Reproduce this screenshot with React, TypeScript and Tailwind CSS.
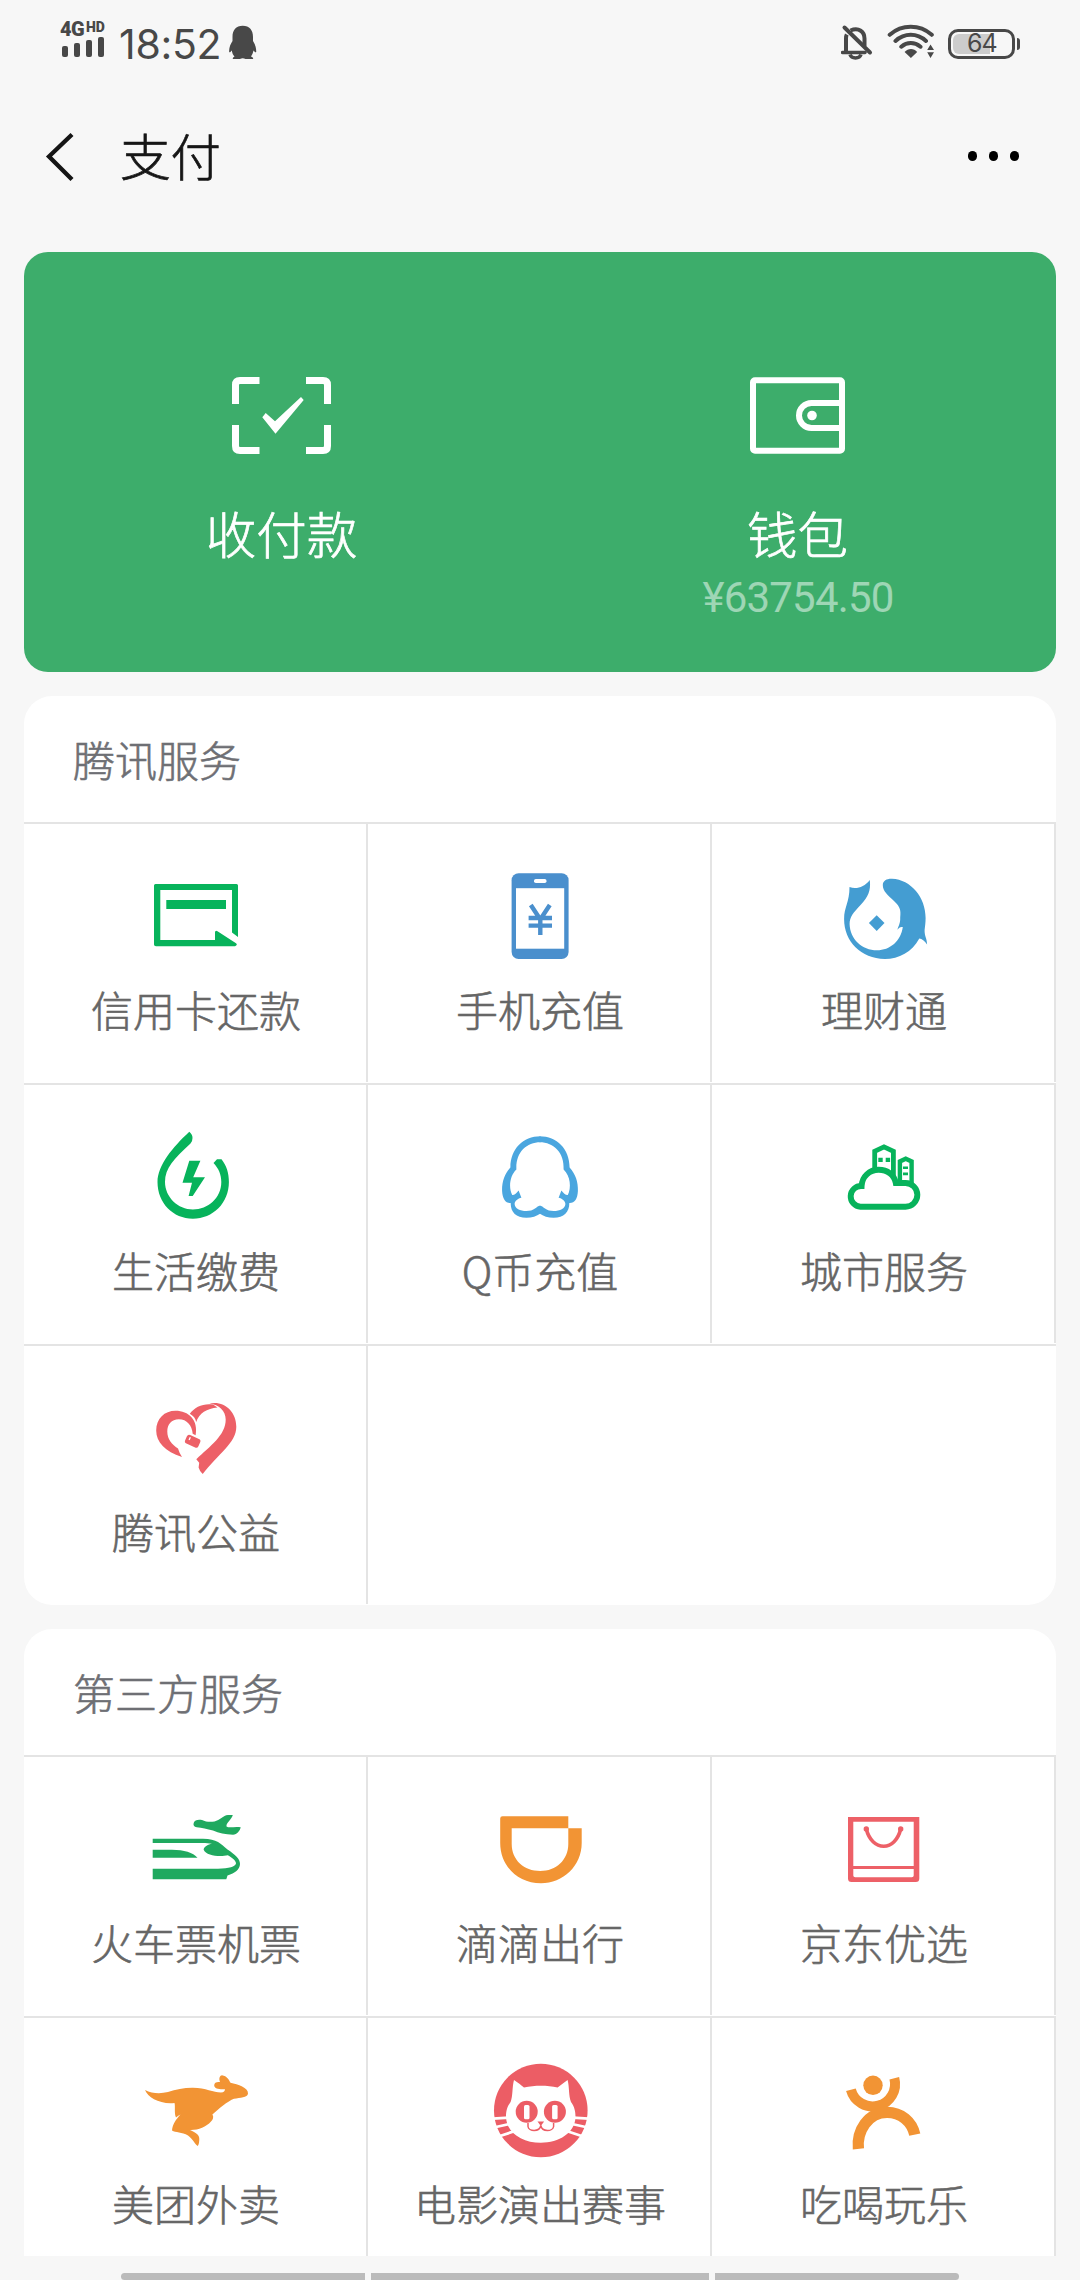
import type { ReactNode } from "react";

const GREEN = "#07b35b";
const RED = "#ed6067";
const ORANGE = "#f29434";

/** 100px square icon; x and y give the origin of its drawing space. */
function Icon({ x, y, children }: { x: number; y: number; children: ReactNode }) {
  return (
    <svg className="block size-[100px] shrink-0 overflow-visible" viewBox={`${x} ${y} 100 100`} fill="none">
      {children}
    </svg>
  );
}

const CardIcon = (
  <Icon x={145} y={867}>
    <path
      fill={GREEN}
      d="M155.5 884H236.5Q238 884 238 885.5V937L232 932.5V890H160.3V940H215V932.5Q215 930 217.5 931.3L236 943.3Q238 945 235 946.3H156Q154 946.3 154 944.5V885.5Q154 884 155.5 884Z"
    />
    <path fill={GREEN} d="M166.3 900H226V909H166.3Z" />
  </Icon>
);

const PhoneIcon = (
  <Icon x={489} y={867}>
    <rect x="511.6" y="873.3" width="57" height="85.7" rx="7" fill="#4a8fcd" />
    <rect x="516" y="888.2" width="48.2" height="60.5" fill="#fff" />
    <rect x="534" y="879" width="12.5" height="4" rx="1.8" fill="#fff" />
    <path d="M530.8 905L540.3 919.5L549.8 905M540.3 918V935M528.6 918H552M528.6 925.6H552" stroke="#4a8fcd" strokeWidth="4.4" />
  </Icon>
);

const FishIcon = (
  <Icon x={833} y={867}>
    <path
      fill="#449dd2"
      d="M849.5 887C856 889.5 864 887.5 869.8 880C871 891 868 897 861 904.5C853 913 849.6 917 849.6 924C850 939 862 950.3 877 950.3C890 950.3 901 941 902.8 927C900 926.500 899 928 897.300 929.800C898.500 926 900.500 923 900.200 917.500C901 910.500 900.300 907 894.500 901.500C887.500 894.500 882.800 891.500 882.800 885C882.800 880.500 887 878.500 892 878.700C911 879.500 925.800 897.500 925.600 918C925.600 923 925 926 924.600 930C924.400 936 927 938.500 927.100 944.500C924.500 941 922 938.700 919.300 938.500C912 952 899 959 884.800 959C861 958.500 844.100 941.500 844.100 919C844.100 907 849.500 902.500 849.500 887Z"
    />
    <path fill="#449dd2" d="M876.700 915.200L884.500 923L876.700 931L868.900 923Z" />
  </Icon>
);

const DropIcon = (
  <Icon x={145} y={1128}>
    <path
      fill={GREEN}
      d="M189.3 1131.7C191.5 1134 192.6 1135.5 192.5 1138Q192.5 1141.5 190.5 1143.5C174 1159 165 1168 165 1182C165 1197 178 1209.5 192.9 1209.5C208 1209.5 221.3 1198 221.3 1182C221.3 1174 218.5 1168.5 213.5 1163L217 1159.3H221.5C226.5 1165.5 228.9 1173 228.9 1182C228.9 1203 213 1218.7 192.9 1218.7C173 1218.7 157.5 1203 157.5 1182C157.5 1165 173 1147 189.3 1131.7Z"
    />
    <path fill={GREEN} d="M189.3 1160.7H200.4L193.2 1177.3H205L192.7 1196H188.6L192 1182.7H182.5Z" />
  </Icon>
);

const PENGUIN_HALF =
  "M539.5 1136.300C557 1136.300 569.500 1149 569.600 1167.500C575.500 1174 578.200 1182 577.900 1191C577.500 1199 574.500 1203.300 569.300 1203C569.500 1212 564 1217.700 553.600 1217.700C548 1217.700 543.500 1216.300 539.500 1213.500V1205.700C541.500 1205.500 543 1207 544.600 1208.300C547.500 1210.500 550 1211 553.600 1211C560 1211 565.200 1208.500 565.400 1204C565.200 1200.500 562 1198.500 558.600 1197.700L561.400 1190.500C563.500 1193 565.500 1195.200 567.800 1195C571.500 1188 570.500 1176 563.600 1169.500C564.500 1153 554 1142.300 539.500 1142.300Z";

const PenguinIcon = (
  <Icon x={489} y={1128}>
    <path fill="#4aa6df" d={PENGUIN_HALF} />
    <path fill="#4aa6df" d={PENGUIN_HALF} transform="matrix(-1 0 0 1 1080 0)" />
  </Icon>
);

const CityIcon = (
  <Icon x={833} y={1128}>
    <path stroke={GREEN} strokeWidth="4.800" d="M874.700 1169V1151.300L884 1146.800L893.400 1151.300V1184" />
    <path stroke={GREEN} strokeWidth="4.400" d="M899.900 1183V1161.500L905.700 1158.700L911.600 1161.500V1184" />
    <path fill={GREEN} d="M878.300 1157.700h4.400v4.400h-4.400zM885.700 1157.700h4.400v4.400h-4.400zM903 1166.500h5v2.600h-5zM903 1172.500h5v2.800h-5z" />
    <path
      fill="#fff"
      stroke={GREEN}
      strokeWidth="5.900"
      d="M861.600 1186C862 1176.500 869.500 1169.800 878.700 1169.800C887.500 1169.800 894.300 1175 895.800 1183H905.500A11.800 11.800 0 0 1 905.500 1206.700H860.500A10.300 10.300 0 0 1 861.600 1186Z"
    />
  </Icon>
);

const HeartIcon = (
  <Icon x={145} y={1389}>
    <path
      fill={RED}
      d="M182 1457C165 1451.500 156.200 1442 156.200 1430.500C156.200 1418.500 164.500 1410.700 175.500 1410.700C188.500 1410.700 198.500 1420 195.600 1435.300L192.700 1433.800C192 1425.500 187 1419.300 178.800 1419.300C171.500 1419.300 167.300 1424.500 167.300 1431.500C167.300 1439.500 172 1444.500 178 1448.500Q179.500 1453.500 182 1457Z"
    />
    <path fill={RED} d="M196.200 1422C195.500 1418.500 193.500 1416 189.800 1413.800C194.500 1407 203.500 1403 213 1404.500L217.500 1407.600C207 1408.500 199 1413.500 196.200 1422Z" />
    <path
      fill={RED}
      d="M209.500 1403.500C224 1400.300 236.300 1411.500 236.300 1426.700C236.300 1443 218 1454 202.700 1474Q199.500 1471 198.600 1467.500L199.200 1462.700L196.300 1459.300C210 1446 225.700 1435.500 225.700 1419.500C225.700 1411 219 1404.500 209.500 1403.500Z"
    />
    <g transform="rotate(24 192.500 1441)">
      <rect x="185.500" y="1436.500" width="14.500" height="9.300" rx="2.500" fill={RED} />
      <path d="M189 1438.500V1441.500" stroke="#fff" strokeWidth="1.300" />
    </g>
  </Icon>
);

const TrainIcon = (
  <Icon x={145} y={1800}>
    <path
      fill="#1fa95f"
      d="M152.700 1838.700H203C217 1838.700 221 1844 227.500 1849.500C235 1854.500 240.200 1859 240 1864C239.800 1869.500 235 1873 227.500 1875.500L226.300 1879.300H152.700V1868.700H218C229 1868.700 235.500 1866.500 236 1863.500C236 1860.500 231.500 1857.500 227.800 1855.300C220 1857 206 1856 203.600 1849.500C204.500 1846 208 1844.500 212 1843.700C209 1843.200 206 1843 202.500 1843H152.700Z"
    />
    <path fill="#1fa95f" d="M152.700 1849.700H172C184 1849.700 193 1852.500 197.500 1857.800H152.700Z" />
    <path
      fill="#1fa95f"
      d="M193.700 1823C194.500 1819.800 198 1819.500 202 1820C206 1822 210 1822 214.500 1821.500C220 1820 223 1815.500 228 1815H232.800C231.500 1820 226 1822.500 226.500 1826.500C229.500 1828.500 235 1826 240.700 1827.300C240 1831 237 1834.300 233 1834.800C225 1834.500 219 1833 213 1830.500C207 1829 202 1827.800 196.700 1827.300C194 1826.800 193 1825 193.700 1823Z"
    />
  </Icon>
);

const DidiIcon = (
  <Icon x={489} y={1800}>
    <path
      fill={ORANGE}
      fillRule="evenodd"
      d="M502.500 1816.300H568.300V1828.300H581.700V1843C581.700 1866 563 1883.300 541 1883.300C518 1883.300 500.200 1866 500.200 1843V1818.500Q500.200 1816.300 502.500 1816.300ZM511.700 1828.300V1844C511.700 1860 524 1871 540.300 1871C556 1871 568.300 1860 568.300 1844V1828.300Z"
    />
  </Icon>
);

const BagIcon = (
  <Icon x={833} y={1800}>
    <path
      fill={RED}
      fillRule="evenodd"
      d="M848 1817H919.300V1878.500Q919.300 1882 915.800 1882H851.500Q848 1882 848 1878.500ZM853.300 1821.700V1866H913.700V1821.700ZM853.300 1869V1875.500Q853.300 1877.300 855.200 1877.300H911.800Q913.700 1877.300 913.700 1875.500V1869Z"
    />
    <path d="M866.300 1829C869 1840 876 1846.200 883.700 1846.200S898 1840 900.700 1829" stroke={RED} strokeWidth="3.600" strokeLinecap="round" />
    <circle cx="866.300" cy="1829" r="2.700" fill={RED} />
    <circle cx="900.700" cy="1829" r="2.700" fill={RED} />
  </Icon>
);

const KangarooIcon = (
  <Icon x={145} y={2061}>
    <path
      fill={ORANGE}
      d="M145 2090C152 2093.500 160 2094 168 2092C176 2089.500 184 2087.700 193 2087.800C206 2088 213 2092.500 221 2092.500C224 2092.500 224.800 2091 225 2089.200C219.500 2089.500 214.500 2089 214.200 2085.500C214 2082.500 217 2081.500 220 2082C218.500 2078 220 2075.500 222 2075.300C227 2076 229 2080 230.500 2082.800C238 2084.500 248.300 2087.500 248 2093.500C247.500 2098 240 2097.500 234 2098.800C228 2101 218 2109.500 212.400 2114.500C214 2117 213 2119.500 211 2121.500C206 2127 198 2130.300 190 2130C196 2132.500 199.500 2135 199.300 2139C199.200 2142 199 2144 197.800 2146C195 2144.500 193 2139 188 2135.500C182 2132 175.500 2132.500 172 2130.500C172.500 2124 176 2119.500 180.500 2114.500C179 2115 177.500 2116 176 2117.500C174 2113 175.500 2107 174.500 2103C160 2104.500 148 2097.500 145 2090Z"
    />
  </Icon>
);

const CatIcon = (
  <Icon x={489} y={2061}>
    <circle cx="540.800" cy="2110.500" r="46.800" fill="#ec5d65" />
    <path
      fill="#fff"
      d="M514 2080C518 2082.500 521 2085 524 2087.500C535 2085 547 2085 557.600 2087.500C561 2085 564 2082.500 567.600 2080C569.500 2087 568.500 2096 571 2102C574.500 2107 575.500 2111 575.500 2117C575 2133 559 2142.700 540.800 2142.700S506.500 2133 506 2117C506 2111 507 2107 510.600 2102C513 2096 512 2087 514 2080Z"
    />
    <path stroke="#fff" strokeWidth="2.800" d="M493 2118.600L509 2117.600M496 2127L512 2123.500M500 2136L515 2131M588.600 2118.600L572.600 2117.600M585.600 2127L569.600 2123.500M581.600 2136L566.600 2131" />
    <circle cx="526.700" cy="2111.800" r="11" fill="#ec5d65" />
    <circle cx="554.900" cy="2111.800" r="11" fill="#ec5d65" />
    <rect x="524" y="2105" width="5.500" height="14.300" rx="1.500" fill="#fff" />
    <rect x="552.100" y="2105" width="5.500" height="14.300" rx="1.500" fill="#fff" />
    <path fill="#ec5d65" d="M537.500 2121.500H544.100L540.800 2126Z" />
    <path stroke="#ec5d65" strokeWidth="1.500" d="M528 2123V2126.500C528.500 2131.500 539.500 2132.500 540.800 2125.500C542.100 2132.500 553 2131.500 553.600 2126.500V2123" />
  </Icon>
);

const PersonIcon = (
  <Icon x={833} y={2061}>
    <circle cx="873" cy="2085.300" r="9.700" fill={ORANGE} />
    <path d="M850.900 2089.800A22.300 22.300 0 0 0 894.300 2078.200" stroke={ORANGE} strokeWidth="10" />
    <path d="M858.400 2148.800C856.500 2131 868 2112.300 887 2112.300C901 2112.300 912 2121.500 914.800 2134.700" stroke={ORANGE} strokeWidth="11.300" />
  </Icon>
);

type Service = { label: string; icon: ReactNode };

const tencent: Service[] = [
  { label: "信用卡还款", icon: CardIcon },
  { label: "手机充值", icon: PhoneIcon },
  { label: "理财通", icon: FishIcon },
  { label: "生活缴费", icon: DropIcon },
  { label: "Q币充值", icon: PenguinIcon },
  { label: "城市服务", icon: CityIcon },
  { label: "腾讯公益", icon: HeartIcon },
];

const thirdParty: Service[] = [
  { label: "火车票机票", icon: TrainIcon },
  { label: "滴滴出行", icon: DidiIcon },
  { label: "京东优选", icon: BagIcon },
  { label: "美团外卖", icon: KangarooIcon },
  { label: "电影演出赛事", icon: CatIcon },
  { label: "吃喝玩乐", icon: PersonIcon },
];

function ServiceCell({ label, icon }: Service) {
  return (
    <div className="flex h-[258px] flex-col items-center border-r-2 border-[#e4e4e4] pt-[43px]">
      {icon}
      <span className="mt-[12px] pl-[2px] text-[42px] leading-[60px] whitespace-nowrap text-[#666] [-webkit-text-stroke:0.6px_#666]">
        {label}
      </span>
    </div>
  );
}

function ServiceSection({ title, items, className }: { title: string; items: Service[]; className: string }) {
  const rows: Service[][] = [];
  for (let i = 0; i < items.length; i += 3) rows.push(items.slice(i, i + 3));
  return (
    <section className={`mx-6 overflow-hidden bg-white ${className}`}>
      <h2 className="flex h-[126px] items-center pb-[2px] pl-[49px] text-[42px] font-light text-[#6e6f74] [-webkit-text-stroke:0.6px_#6e6f74]">
        {title}
      </h2>
      {rows.map((row) => (
        <div key={row[0].label} className="grid h-[261px] grid-cols-3 border-t-2 border-[#e4e4e4]">
          {row.map((s) => (
            <ServiceCell key={s.label} {...s} />
          ))}
        </div>
      ))}
    </section>
  );
}

function StatusBar() {
  return (
    <div className="flex h-[84px] items-start justify-between pr-[60px] pl-[60px] text-[#484848]">
      <div className="flex">
        <div className="w-[48px] pt-[20px]">
          <div className="flex h-[17px] font-['Roboto'] leading-[19px] font-black">
            <span className="w-[26px] origin-left text-[20px] tracking-[-0.5px]">4G</span>
            <span className="text-[14px] leading-[15px]">HD</span>
          </div>
          <div className="flex h-[20px] items-end gap-[6px] pl-[2px]">
            <span className="h-[11px] w-[6px] rounded-[2px] bg-[#484848]" />
            <span className="h-[14px] w-[6px] rounded-[2px] bg-[#484848]" />
            <span className="h-[17px] w-[6px] rounded-[2px] bg-[#484848]" />
            <span className="h-[20px] w-[6px] rounded-[2px] bg-[#484848]" />
          </div>
        </div>
        <span className="w-[121px] pl-[11px] pt-[20px] font-['Inter'] text-[41px] leading-[48px] font-normal tracking-[-0.3px]">18:52</span>
        <svg className="mt-[25px] h-[35px] w-[28px]" viewBox="230 25 28 35" fill="#484848">
          <path d="M243.700 25.700C250.500 25.700 254 30 254 37V41C256 44 257.400 48 257.200 52C256.500 53 255.500 51.500 254.500 50.500C254 53 253 55 252 56.500C254 57.500 254.500 58 254 59H246.500Q243.700 57.500 241 59H234Q233 58 235.500 56.500C234 55 233.200 53 232.800 50.500C231.800 51.500 230.800 53 230.200 52C229.800 48 231.500 44 233.500 41V37C233.500 30 237 25.700 243.700 25.700Z" />
        </svg>
      </div>
      <div className="flex">
        <svg className="mt-[24px] h-[36px] w-[32px]" viewBox="841 24 32 36" fill="none" stroke="#484848">
          <path d="M842.500 52.500H865" strokeWidth="3.500" strokeLinecap="round" />
          <path d="M846 52V38.500C846 36.500 846.300 35.500 846.800 34.500M850.500 30.500C859 27 864.500 32 864.500 38.500V46" strokeWidth="4" />
          <path d="M850 54.500C851.500 59 859.500 59 861 54.500" strokeWidth="3.500" />
          <path d="M844.500 27.500L870 52.500" strokeWidth="4" strokeLinecap="round" />
        </svg>
        <svg className="mt-[24px] ml-[14px] h-[36px] w-[48px]" viewBox="887 24 48 36" fill="none" stroke="#484848" strokeLinecap="round">
          <path d="M889.700 34.800C902 24.200 919.500 24.200 931.800 34.800M895.500 41C904.500 32.800 917 32.800 926 41M901.300 46.700C907 41.800 914.500 41.800 920.500 46.700" strokeWidth="4" />
          <path d="M904.600 52C908 48 914 48 917.200 52L910.900 58Z" fill="#484848" stroke="none" />
          <path d="M930.500 44.500L934 50H927.200ZM930.500 58L934 52.300H927.200Z" fill="#484848" stroke="none" />
        </svg>
        <div className="mt-[27px] ml-[13px] flex items-center gap-[2px]">
          <div className="flex h-[30px] w-[67px] rounded-[10px] border-[3px] border-[#484848] p-[2px]">
            <div className="h-[20px] w-[37px] rounded-l-[6px] bg-[#ccc]">
              <span className="block pl-[14px] font-['Inter'] text-[25px] leading-[19px] font-normal tracking-[-1px]">64</span>
            </div>
          </div>
          <span className="h-[12px] w-[3px] rounded-r-[3px] bg-[#484848]" />
        </div>
      </div>
    </div>
  );
}

export default function App() {
  return (
    <div className="flex h-[2280px] w-[1080px] flex-col overflow-hidden bg-[#f7f7f7] font-['Noto_Sans_CJK_SC',sans-serif] font-light">
      <StatusBar />
      <header className="flex h-[168px] items-start justify-between pr-[61px] pl-[45px]">
        <div className="flex">
          <svg className="mt-[46px] h-[54px] w-[32px]" viewBox="45 130 32 54" fill="none">
            <path d="M72 134.500L49 156.500L72 179.500" stroke="#151515" strokeWidth="4.300" />
          </svg>
          <h1 className="ml-[43px] mt-[34px] text-[50.500px] leading-[72px] text-[#161616] [-webkit-text-stroke:0.7px_#161616]">支付</h1>
        </div>
        <div className="mt-[67px] flex gap-[11.500px]">
          <span className="size-[9.500px] rounded-full bg-black" />
          <span className="size-[9.500px] rounded-full bg-black" />
          <span className="size-[9.500px] rounded-full bg-black" />
        </div>
      </header>

      <section className="mx-6 grid h-[420px] shrink-0 grid-cols-2 rounded-3xl bg-[#3dad6b] text-white">
        <div className="flex flex-col items-center pt-[113px]">
          <svg className="h-[100px] w-[120px]" viewBox="222 365 120 100" fill="none">
            <path
              d="M235.500 404V385Q235.500 380.500 240 380.500H259.500M306 380.500H323Q327.500 380.500 327.500 385V404M327.500 425V446Q327.500 450.500 323 450.500H306M259.500 450.500H240Q235.500 450.500 235.500 446V425"
              stroke="#fff"
              strokeWidth="7"
            />
            <path d="M262.300 417.300L265.700 413L275 421.300L301 397L303.700 400L275.500 433.700Z" fill="#fff" />
          </svg>
          <span className="mt-[31px] pr-[1px] text-[50.500px] leading-[72px] [-webkit-text-stroke:0.7px_#fff]">收付款</span>
        </div>
        <div className="flex flex-col items-center pt-[113px]">
          <svg className="h-[100px] w-[120px]" viewBox="738 365 120 100" fill="none" stroke="#fff" strokeWidth="6">
            <rect x="753" y="380.300" width="89" height="70.500" rx="2" />
            <path d="M842 403H811.500A12.500 12.500 0 0 0 811.500 428H842" />
            <circle cx="812" cy="415.500" r="4.800" fill="#fff" stroke="none" />
          </svg>
          <span className="mt-[31px] pr-[1px] text-[50.500px] leading-[72px] [-webkit-text-stroke:0.7px_#fff]">钱包</span>
          <span className="mt-[6px] font-['Roboto'] text-[42px] leading-[48px] font-normal tracking-[-0.800px] text-white/50">¥63754.50</span>
        </div>
      </section>

      <ServiceSection title="腾讯服务" items={tencent} className="mt-6 h-[909px] shrink-0 rounded-[28px]" />
      <ServiceSection title="第三方服务" items={thirdParty} className="mt-6 h-[627px] shrink-0 rounded-t-[28px]" />

      <div className="mt-[17px] flex h-[7px] shrink-0 gap-[6px] pl-[121px]">
        <span className="w-[244px] rounded-l-[4px] bg-[#bbb]" />
        <span className="w-[338px] bg-[#bbb]" />
        <span className="w-[244px] rounded-r-[4px] bg-[#bbb]" />
      </div>
    </div>
  );
}
